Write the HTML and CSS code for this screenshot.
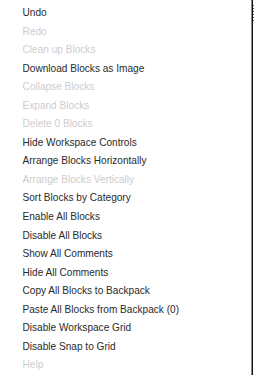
FILE: index.html
```html
<!DOCTYPE html>
<html lang="en">
<head>
    <meta charset="UTF-8">
    <meta name="viewport" content="width=device-width, initial-scale=1.0">
    <title>Workspace menu</title>
    <link rel="stylesheet" href="styles.css">
</head>
<body>
    <div class="frame">
        <ul class="menu">
            <li class="item">Undo</li>
            <li class="item disabled">Redo</li>
            <li class="item disabled">Clean up Blocks</li>
            <li class="item">Download Blocks as Image</li>
            <li class="item disabled">Collapse Blocks</li>
            <li class="item disabled">Expand Blocks</li>
            <li class="item disabled">Delete 0 Blocks</li>
            <li class="item">Hide Workspace Controls</li>
            <li class="item">Arrange Blocks Horizontally</li>
            <li class="item disabled">Arrange Blocks Vertically</li>
            <li class="item">Sort Blocks by Category</li>
            <li class="item">Enable All Blocks</li>
            <li class="item">Disable All Blocks</li>
            <li class="item">Show All Comments</li>
            <li class="item">Hide All Comments</li>
            <li class="item">Copy All Blocks to Backpack</li>
            <li class="item">Paste All Blocks from Backpack (0)</li>
            <li class="item">Disable Workspace Grid</li>
            <li class="item">Disable Snap to Grid</li>
            <li class="item disabled">Help</li>
        </ul>
        <div class="edge"></div>
        <div class="ticks"></div>
    </div>
</body>
</html>
```

FILE: styles.css
```css
html, body {
    margin: 0;
    padding: 0;
    background: #fff;
}
.frame {
    display: flex;
    height: 375px;
}
.menu {
    flex: 1;
    list-style: none;
    margin: 0;
    padding: 4px 0 0 22.5px;
    font-family: "Liberation Sans", Arial, sans-serif;
    font-size: 10.1px;
    color: #2a2a2a;
}
.item {
    height: 18.55px;
    line-height: 18.55px;
    white-space: nowrap;
}
.item.disabled {
    color: #cdcdcd;
}
.edge {
    width: 1px;
    border-left: 1px solid #8a8a8a;
    background: #111;
}
.ticks {
    width: 1px;
    height: 16px;
    margin-top: 5px;
    background: repeating-linear-gradient(#555 0 1px, #fff 1px 3px);
}
```
